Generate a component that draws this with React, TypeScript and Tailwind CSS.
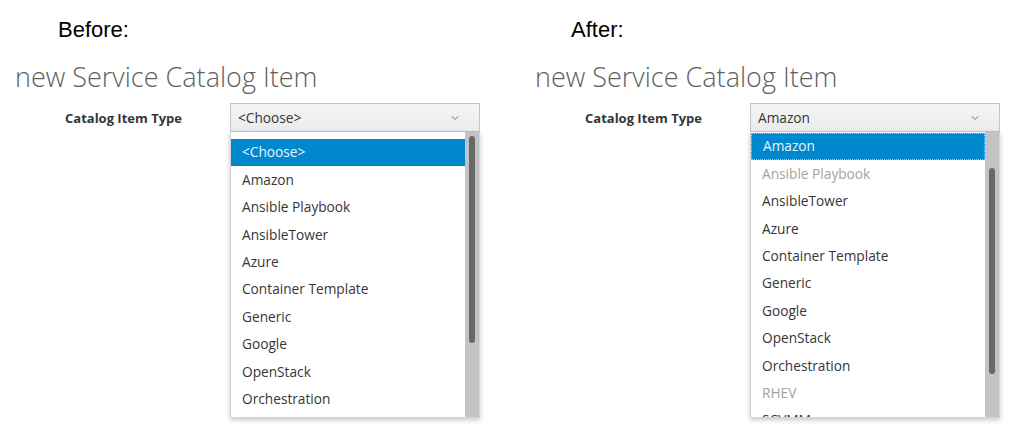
import { ChevronDown } from "lucide-react";

type Option = { label: string; disabled?: boolean };

const beforeOptions: Option[] = [
  { label: "<Choose>" },
  { label: "Amazon" },
  { label: "Ansible Playbook" },
  { label: "AnsibleTower" },
  { label: "Azure" },
  { label: "Container Template" },
  { label: "Generic" },
  { label: "Google" },
  { label: "OpenStack" },
  { label: "Orchestration" },
];

const afterOptions: Option[] = [
  { label: "Amazon" },
  { label: "Ansible Playbook", disabled: true },
  { label: "AnsibleTower" },
  { label: "Azure" },
  { label: "Container Template" },
  { label: "Generic" },
  { label: "Google" },
  { label: "OpenStack" },
  { label: "Orchestration" },
  { label: "RHEV", disabled: true },
  { label: "SCVMM" },
];

/**
 * CatalogPanel
 *
 * One half of the comparison: heading, form title and the open select.
 */
function CatalogPanel({
  caption,
  captionIndent,
  value,
  options,
  variant,
}: {
  caption: string;
  captionIndent: string;
  value: string;
  options: Option[];
  variant: "before" | "after";
}) {
  const isAfter = variant === "after";

  return (
    <div className="w-[520px] shrink-0">
      {/* Caption */}
      <div
        className={`pt-[17px] text-[22px] leading-[26px] text-black ${captionIndent}`}
        style={{ fontFamily: '"Liberation Sans", Arial, sans-serif' }}
      >
        {caption}
      </div>

      {/* Form title */}
      <h1 className="mt-[18px] pl-[15px] text-[27px] font-light leading-[32px] text-[#5f5f5f]">
        new Service Catalog Item
      </h1>

      {/* Field row */}
      <div className="mt-[10px] flex">
        <label className="ml-[65px] w-[165px] shrink-0 whitespace-nowrap pt-[6px] text-[13px] font-bold leading-[18px] text-[#363636]">
          Catalog Item Type
        </label>

        <div className="w-[250px]">
          <div className="flex h-[29px] items-center justify-between border border-[#c4c4c4] bg-gradient-to-b from-[#f5f5f5] to-[#ebebeb] pl-[7px] pr-[18px] pt-[1px] text-[13.7px] text-[#363636]">
            <span>{value}</span>
            <ChevronDown className="h-[12px] w-[12px] text-[#777]" strokeWidth={2} />
          </div>

          {/* Open list */}
          <div className="flex h-[286px] border border-t-0 border-[#d4d4d4] bg-white shadow-[0_2px_5px_rgba(0,0,0,0.22)]">
            <ul className={`flex-1 overflow-hidden ${isAfter ? "pt-[1px]" : "pt-[7px]"}`}>
              {options.map((option, index) => {
                const selected = index === 0;
                return (
                  <li
                    key={option.label}
                    className={`flex h-[27.4px] items-center pl-[11px] text-[13.7px] ${
                      selected
                        ? isAfter
                          ? "border border-dotted border-[#8fd0f0] bg-[#0088ce] text-[#e8f5fc]"
                          : "bg-[#0088ce] text-[#e8f5fc]"
                        : option.disabled
                          ? "text-[#a3a3a3]"
                          : "text-[#363636]"
                    }`}
                  >
                    {option.label}
                  </li>
                );
              })}
            </ul>

            {/* Scrollbar */}
            <div className="flex w-[14px] flex-col items-center bg-[#c3c3c3]">
              <div
                className={`w-[6px] rounded-full bg-[#686868] ${
                  isAfter ? "mt-[36px] h-[206px]" : "mt-[4px] h-[207px]"
                }`}
              />
            </div>
          </div>
        </div>
      </div>
    </div>
  );
}

export default function App() {
  return (
    <div
      className="flex h-[443px] w-[1016px] overflow-hidden bg-white"
      style={{ fontFamily: '"Open Sans", "Noto Sans", sans-serif' }}
    >
      <CatalogPanel
        caption="Before:"
        captionIndent="pl-[58px]"
        value="<Choose>"
        options={beforeOptions}
        variant="before"
      />
      <CatalogPanel
        caption="After:"
        captionIndent="pl-[51px]"
        value="Amazon"
        options={afterOptions}
        variant="after"
      />
    </div>
  );
}
